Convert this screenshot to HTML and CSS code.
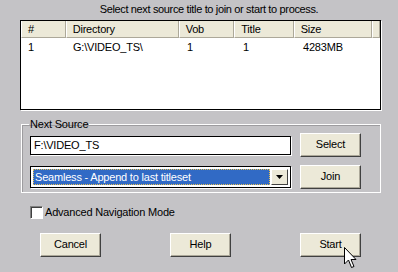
FILE: index.html
```html
<!DOCTYPE html>
<html>
<head>
<meta charset="utf-8">
<link rel="stylesheet" href="styles.css">
</head>
<body>
<div class="dlg">
  <div class="title">Select next source title to join or start to process.</div>
  <div class="list">
    <div class="hdr">
      <div class="hc c1">#</div>
      <div class="hc c2">Directory</div>
      <div class="hc c3">Vob</div>
      <div class="hc c4">Title</div>
      <div class="hc c5">Size</div>
      <div class="hc c6"></div>
    </div>
    <div class="row">
      <div class="rc c1">1</div>
      <div class="rc c2">G:\VIDEO_TS\</div>
      <div class="rc c3">1</div>
      <div class="rc c4">1</div>
      <div class="rc c5">4283MB</div>
    </div>
  </div>
  <fieldset class="group">
    <legend class="legend">Next Source</legend>
    <div class="line">
      <div class="input">F:\VIDEO_TS</div>
      <div class="btn">Select</div>
    </div>
    <div class="line line2">
      <div class="combo">
        <div class="combo-val"><span class="sel">Seamless - Append to last titleset</span></div>
        <div class="combo-arrow"><svg width="7" height="4" viewBox="0 0 7 4"><path d="M0 0h7L3.5 4z" fill="#000"/></svg></div>
      </div>
      <div class="btn">Join</div>
    </div>
  </fieldset>
  <div class="check">
    <span class="box"></span>
    <span class="check-label">Advanced Navigation Mode</span>
  </div>
  <div class="buttons">
    <div class="btn">Cancel</div>
    <div class="btn">Help</div>
    <div class="btn">Start</div>
  </div>
  <svg class="cursor" width="13" height="22" viewBox="0 0 13 22">
    <path d="M0.5 0.5 V17 L4.5 13 L7.5 20.5 L10 19.5 L7 12.5 H12 Z" fill="#fff" stroke="#000" stroke-width="1"/>
  </svg>
</div>
</body>
</html>
```
FILE: styles.css
```css
html, body {
  margin: 0;
  padding: 0;
}
body {
  width: 398px;
  height: 272px;
  background: #c4c3c6;
  font-family: "Liberation Sans", Arial, sans-serif;
  font-size: 11px;
  letter-spacing: -0.2px;
  color: #000;
  overflow: hidden;
}
.dlg {
  position: relative;
  width: 398px;
  height: 272px;
}
.title {
  height: 20px;
  line-height: 18px;
  text-align: center;
  padding-left: 20px;
  box-sizing: border-box;
  letter-spacing: -0.35px;
}
.list {
  margin-left: 20px;
  width: 361px;
  height: 90px;
  box-sizing: border-box;
  border: 1px solid #000;
  background: #fff;
  box-shadow: 1px 1px 0 #fff;
}
.hdr {
  display: flex;
  height: 17px;
}
.hc {
  box-sizing: border-box;
  background: #ece9d8;
  border-left: 1px solid #fff;
  border-right: 1px solid #aca899;
  border-bottom: 1px solid #aca899;
  padding-left: 6px;
  line-height: 16px;
}
.c1 { width: 45px; }
.c2 { width: 114px; }
.c3 { width: 56px; }
.c4 { width: 60px; }
.c5 { width: 79px; }
.c6 { flex: 1; }
.row {
  display: flex;
  height: 15px;
  line-height: 15px;
  margin-top: 2px;
}
.rc {
  box-sizing: border-box;
  padding-left: 7px;
}
.group {
  margin: 8px 0 0 21px;
  width: 360px;
  height: 75px;
  box-sizing: border-box;
  border: 1px solid #fff;
  box-shadow: inset 1px 1px 0 #9d9c9f;
  padding: 0 0 0 8px;
}
.legend {
  padding: 0 1px;
  margin-left: -1px;
  line-height: 12px;
}
.line {
  display: flex;
  align-items: center;
  gap: 9px;
  margin-top: 3px;
}
.line2 {
  margin-top: 8px;
}
.input {
  width: 261px;
  height: 19px;
  box-sizing: border-box;
  border: 1px solid #000;
  box-shadow: 1px 1px 0 #fff;
  background: #fff;
  padding-left: 3px;
  line-height: 17px;
}
.btn {
  width: 61px;
  height: 24px;
  box-sizing: border-box;
  background: #ece9d8;
  border-top: 1px solid #fff;
  border-left: 1px solid #fff;
  border-right: 1px solid #404040;
  border-bottom: 1px solid #404040;
  box-shadow: inset -1px -1px 0 #aca899;
  text-align: center;
  line-height: 21px;
}
.combo {
  width: 261px;
  height: 22px;
  box-sizing: border-box;
  border: 1px solid #000;
  box-shadow: 1px 1px 0 #fff;
  background: #fff;
  display: flex;
  padding: 2px;
  gap: 1px;
}
.combo-val {
  flex: 1;
  background: #316ac5;
  outline: 1px dotted #e8c050;
  outline-offset: -1px;
  color: #fff;
  padding-left: 2px;
  line-height: 16px;
}
.combo-arrow {
  width: 17px;
  box-sizing: border-box;
  background: #ece9d8;
  border-top: 1px solid #fff;
  border-left: 1px solid #fff;
  border-right: 1px solid #404040;
  border-bottom: 1px solid #404040;
  display: flex;
  align-items: center;
  justify-content: center;
}
.check {
  display: flex;
  align-items: center;
  gap: 2px;
  margin: 12px 0 0 30px;
  height: 14px;
}
.box {
  width: 13px;
  height: 13px;
  box-sizing: border-box;
  background: #fff;
  border-top: 1px solid #808080;
  border-left: 1px solid #808080;
  border-right: 1px solid #fff;
  border-bottom: 1px solid #fff;
  box-shadow: inset 1px 1px 0 #404040;
}
.buttons {
  display: flex;
  gap: 69px;
  margin: 14px 0 0 40px;
}
.cursor {
  position: absolute;
  left: 344px;
  top: 247px;
}
```
